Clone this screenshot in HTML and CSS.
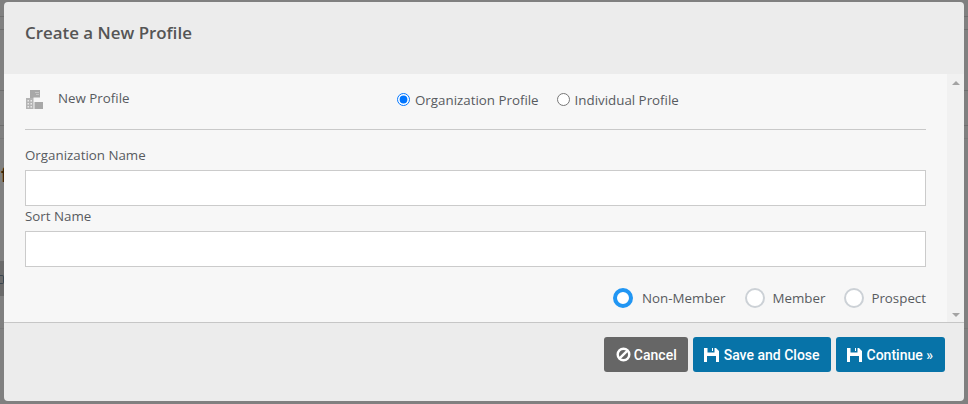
FILE: index.html
```html
<!DOCTYPE html>
<html lang="en">
<head>
<meta charset="utf-8">
<title>Create a New Profile</title>
<link rel="stylesheet" href="styles.css">
</head>
<body>
<div class="backdrop" aria-hidden="true">
  <i class="rule r16"></i><i class="rule r29"></i><i class="rule r90"></i><i class="rule r125"></i><i class="rule faint r138"></i><i class="rule faint r328"></i>
  <span class="peek-f">f</span>
  <span class="peek-box"></span>
</div>
<div class="modal">
  <header class="modal-head"><h1>Create a New Profile</h1></header>
  <div class="modal-body">
    <form class="content">
      <div class="type-row">
        <div class="type-title">
          <svg class="bldg" viewBox="0 0 17 19" width="17" height="19" aria-hidden="true">
            <path fill="#a8a8a8" d="M4 0h10v7.500H7.500V8H4z"/>
            <path fill="#c4c4c4" d="M9 2h4v1H9zM10 4h3v1h-3z"/>
            <path fill="#b4b4b4" d="M0 8h7.500v11H0z"/>
            <path fill="#e9e9e9" d="M1.500 10H3v1.500H1.500zM4.500 10H6v1.500H4.500zM1.500 13H3v1.500H1.500zM4.500 13H6v1.500H4.500zM1.500 16H3v1.500H1.500zM4.500 16H6v1.500H4.500z"/>
            <path fill="#a8a8a8" d="M8.500 12H17v7H8.500z"/>
          </svg>
          <span>New Profile</span>
        </div>
        <div class="type-options">
          <label class="native"><input type="radio" name="ptype" checked>Organization Profile</label>
          <label class="native"><input type="radio" name="ptype">Individual Profile</label>
        </div>
      </div>
      <hr class="divider">
      <label class="field first"><span>Organization Name</span><input type="text"></label>
      <label class="field"><span>Sort Name</span><input type="text"></label>
      <div class="status">
        <label class="fancy"><i class="dot on"></i>Non-Member</label>
        <label class="fancy"><i class="dot"></i>Member</label>
        <label class="fancy"><i class="dot"></i>Prospect</label>
      </div>
    </form>
    <div class="scrollbar" aria-hidden="true"><i class="arrow up"></i><i class="arrow down"></i></div>
  </div>
  <footer class="modal-foot">
    <button type="button" class="btn grey">
      <svg viewBox="0 0 16 16" width="15" height="15" aria-hidden="true"><circle cx="8" cy="8" r="6.200" fill="none" stroke="#fff" stroke-width="2.600"/><path d="M3.800 12.200 12.200 3.800" stroke="#fff" stroke-width="2.600"/></svg>
      Cancel
    </button>
    <button type="button" class="btn blue save">
      <svg viewBox="0 0 15 14" width="15" height="14" aria-hidden="true"><path fill="#fff" fill-rule="evenodd" d="M0 0h12l3 3v11H0zM3.500 0v4.500H10.500V0H9v3H8V0zM3 8v6h9V8z"/></svg>
      Save and Close
    </button>
    <button type="button" class="btn blue">
      <svg viewBox="0 0 15 14" width="15" height="14" aria-hidden="true"><path fill="#fff" fill-rule="evenodd" d="M0 0h12l3 3v11H0zM3.500 0v4.500H10.500V0H9v3H8V0zM3 8v6h9V8z"/></svg>
      Continue »
    </button>
  </footer>
</div>
</body>
</html>
```
FILE: styles.css
```css
* { box-sizing: border-box; }
html, body { margin: 0; height: 100%; }
body {
  width: 968px;
  height: 404px;
  overflow: hidden;
  position: relative;
  background: #808080;
  font-family: "Open Sans", "Noto Sans", sans-serif;
  font-size: 13.33px;
  color: #585b5f;
  padding: 2px 4px 3px;
}
.backdrop { position: absolute; inset: 0; }
.rule { position: absolute; left: 0; right: 0; height: 1px; background: #6e6e6e; }
.rule.faint { background: #787878; }
.r16 { top: 16px; } .r29 { top: 29px; } .r90 { top: 90px; } .r125 { top: 125px; } .r138 { top: 138px; } .r328 { top: 328px; }
.peek-f { position: absolute; left: 1px; top: 163px; font: 700 20px/24px "Liberation Sans", sans-serif; color: #3a2508; }
.peek-box { position: absolute; left: 0; top: 261px; width: 4px; height: 35px; background: #6a6a6a; }
.peek-box::after { content: ""; position: absolute; left: 0; top: 14px; width: 3px; height: 7px; border: 1px solid #3a4650; border-left: 0; border-radius: 0 2px 2px 0; }

.modal {
  position: relative;
  width: 960px;
  height: 399px;
  display: flex;
  flex-direction: column;
  background: #ececec;
  border-radius: 4px;
  overflow: hidden;
}
.modal-head { height: 72px; flex: none; padding: 19px 21px 0; }
.modal-head h1 { margin: 0; font-size: 16.9px; line-height: 24px; font-weight: 600; color: #555; }

.modal-body { height: 248px; flex: none; display: flex; background: #f7f7f7; }
.content { flex: 1; min-width: 0; padding: 0 21px; }
.scrollbar { width: 17px; flex: none; background: #f1f1f1; display: flex; flex-direction: column; justify-content: space-between; align-items: center; padding: 7px 0 5px; }
.arrow { width: 0; height: 0; border-left: 4px solid transparent; border-right: 4px solid transparent; }
.arrow.up { border-bottom: 4px solid #a3a3a3; }
.arrow.down { border-top: 4px solid #a3a3a3; }

.type-row { height: 55px; display: flex; align-items: flex-start; }
.type-title { width: 372px; display: flex; align-items: center; gap: 15px; padding: 16px 0 0 1px; }
.bldg { display: block; }
.type-title span { position: relative; bottom: 2px; }
.type-options { display: flex; gap: 18px; padding-top: 16px; }
.native { display: flex; align-items: center; line-height: 20px; }
.native input { margin: 0 5px 0 0; width: 13px; height: 13px; position: relative; bottom: 1px; }
.divider { margin: 0; border: 0; border-top: 1px solid #c9c9c9; }

.field { display: block; }
.field span { display: block; line-height: 18px; margin-bottom: 6px; }
.field.first { padding-top: 16px; }
.field input { display: block; width: 100%; height: 36px; border: 1px solid #cbcbcb; background: #fff; padding: 6px 12px; }
.field + .field { padding-top: 1px; }

.status { display: flex; justify-content: flex-end; gap: 19px; margin-top: 21px; }
.fancy { display: flex; align-items: center; gap: 7px; line-height: 20px; }
.fancy:first-child { gap: 9px; margin-right: 1px; }
.dot { width: 20px; height: 20px; border-radius: 50%; background: #fff; border: 2px solid #ccd1d6; }
.dot.on { border: 4.5px solid #2196f3; }

.modal-foot { flex: 1; border-top: 1px solid #c6c6c6; display: flex; justify-content: flex-end; gap: 5px; padding: 14px 19px 0 0; align-items: flex-start; }
.btn { height: 35px; display: inline-flex; align-items: center; gap: 5px; border: 0; border-radius: 3px; color: #fff; font: 500 14px/20px Roboto, sans-serif; padding: 0 12px 0 11px; }
.btn.grey { background: #666; gap: 3px; padding: 0 11px 0 12px; }
.btn.blue { background: #0773a8; }
.btn.save { padding-right: 11px; }
```
